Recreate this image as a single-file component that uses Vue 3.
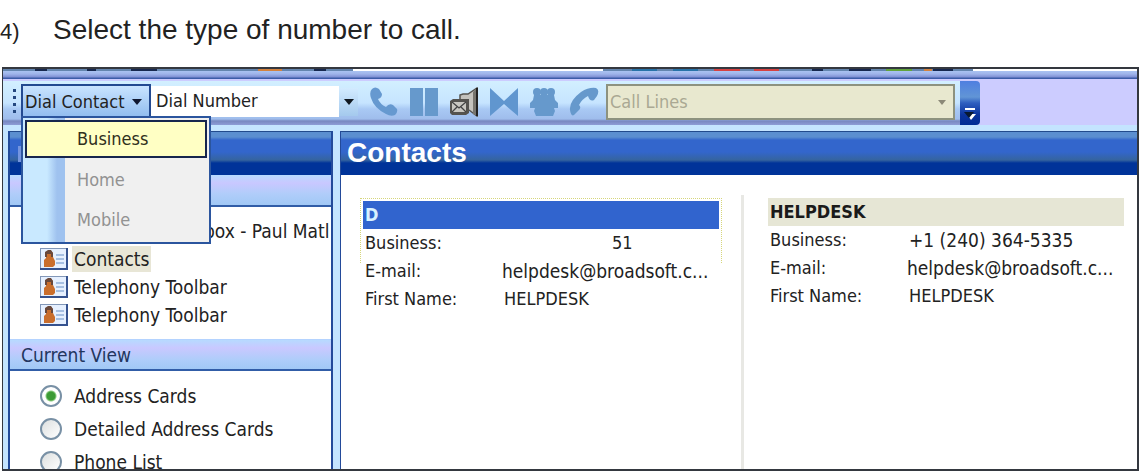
<script setup>
import { ref } from 'vue'

const menu = [
  { label: 'Business', enabled: true },
  { label: 'Home', enabled: false },
  { label: 'Mobile', enabled: false },
]
const folders = [
  { label: 'Contacts', selected: true },
  { label: 'Telephony Toolbar' },
  { label: 'Telephony Toolbar' },
]
const views = ['Address Cards', 'Detailed Address Cards', 'Phone List']
const view = ref('Address Cards')
const cards = [
  {
    title: 'D',
    active: true,
    rows: [['Business:', '51', 'short'], ['E-mail:', 'helpdesk@broadsoft.c...', 'mail'], ['First Name:', 'HELPDESK', 'name']],
  },
  {
    title: 'HELPDESK',
    active: false,
    rows: [['Business:', '+1 (240) 364-5335', 'phone'], ['E-mail:', 'helpdesk@broadsoft.c...', 'mail'], ['First Name:', 'HELPDESK', 'name']],
  },
]
</script>

<template>
  <main class="page">
    <header class="step"><span class="num">4)</span><span>Select the type of number to call.</span></header>
    <section class="frame">
      <div class="strip">
        <svg class="bits" width="1134" height="2" aria-hidden="true">
          <rect width="1134" height="2" fill="#6485ae" />
          <path d="M350 0h250v2h-250zM970 0h164v2h-164z" fill="#fff" />
          <path d="M32 0h12v2h-12zM84 0h9v2h-9zM128 0h26v2h-26zM311 0h12v2h-12zM809 0h11v2h-11zM846 0h22v2h-22zM930 0h20v2h-20z" fill="#17284f" />
          <path d="M255 0h24v2h-24zM921 0h8v2h-8z" fill="#d3823f" />
          <path d="M629 0h25v2h-25zM670 0h25v2h-25z" fill="#2873a8" />
          <path d="M711 0h26v2h-26zM751 0h25v2h-25z" fill="#d64242" />
          <path d="M883 0h26v2h-26z" fill="#62a33c" />
        </svg>
      </div>
      <div class="band">
        <div class="toolbar">
          <svg class="grip" width="4" height="26" viewBox="0 0 4 26" aria-hidden="true">
            <path d="M0 0h3v3H0zM0 7h3v3H0zM0 14h3v3H0zM0 21h3v3H0z" fill="#24477f" />
          </svg>
          <div class="drop">
            <button class="dial" type="button" aria-haspopup="true">
              Dial Contact
              <svg width="10" height="6" viewBox="0 0 10 6" aria-hidden="true"><path d="M0 0h10L5 6z" fill="#101830" /></svg>
            </button>
            <div class="menu" role="menu">
              <button v-for="m in menu" :key="m.label" type="button" role="menuitem" class="item" :class="{ hot: m.enabled }" :disabled="!m.enabled">{{ m.label }}</button>
            </div>
          </div>
          <input class="number" type="text" value="Dial Number" aria-label="Dial Number" />
          <button class="arrow" type="button" aria-label="Recent numbers">
            <svg width="10" height="6" viewBox="0 0 10 6" aria-hidden="true"><path d="M0 0h10L5 6z" fill="#101820" /></svg>
          </button>
          <div class="tools">
            <button class="tool" type="button" aria-label="Call">
              <svg width="30" height="30" viewBox="0 0 30 30"><path d="M3 2Q6 -1 10 2L13 7Q13 11 9 12Q11 17 17 20Q20 16 24 18L28 22Q29 25 26 28Q22 30 17 27Q5 21 2 11Q0 5 3 2Z" fill="#6699d0" /></svg>
            </button>
            <button class="tool" type="button" aria-label="Hold">
              <svg width="30" height="30" viewBox="0 0 30 30"><path d="M1 1h13v28H1zM16 1h13v28H16z" fill="#6699cc" /></svg>
            </button>
            <button class="tool" type="button" aria-label="Voice mail">
              <svg width="30" height="30" viewBox="0 0 30 30">
                <path d="M11 13V8l3-1h5l9-6v28l-8-6" fill="#c4c2bd" stroke="#55534f" stroke-width="1.5" />
                <path d="M24 5v22l4 2V1z" fill="#77756f" /><path d="M28 1v28" stroke="#222" stroke-width="2" />
                <path d="M1 14l3-2h16v14l-3 2H3l-2-2z" fill="#55534f" />
                <path d="M3 15h14v10H3z" fill="#c9c7c1" />
                <path d="M3 15l7 6 7-6M3 25l5-5M17 25l-5-5" fill="none" stroke="#444" stroke-width="1.3" />
              </svg>
            </button>
            <button class="tool" type="button" aria-label="Transfer">
              <svg width="30" height="30" viewBox="0 0 30 30"><path d="M1 1l14 13L29 1v28L15 17 1 29z" fill="#6096cf" /></svg>
            </button>
            <button class="tool" type="button" aria-label="Conference">
              <svg width="30" height="30" viewBox="0 0 30 30" fill="#6699cc">
                <circle cx="8" cy="5" r="4" /><circle cx="15" cy="5" r="4" /><circle cx="22" cy="5" r="4" />
                <path d="M5 8h20l1 5 3 3v5h-4l1 3-2 5H7l-2-5 1-3H1v-5l3-3z" />
              </svg>
            </button>
            <button class="tool" type="button" aria-label="Hang up">
              <svg width="30" height="30" viewBox="0 0 30 30"><path d="M1 23Q0 14 12 5Q20 0 27 1Q31 3 28 9L25 13Q21 15 19 9Q13 12 10 18Q13 21 9 24L5 28Q2 30 1 23Z" fill="#6699cc" /></svg>
            </button>
          </div>
          <div class="lines">
            <select disabled aria-label="Call Lines"><option>Call Lines</option></select>
            <svg width="8" height="5" viewBox="0 0 8 5" aria-hidden="true"><path d="M0 0h8L4 5z" fill="#8b8978" /></svg>
          </div>
        </div>
        <button class="more" type="button" aria-label="Toolbar options">
          <svg width="12" height="12" viewBox="0 0 12 12" aria-hidden="true"><path d="M1 0h10v2H1z" fill="#fff" /><path d="M3 6h9l-5 6z" fill="#fff" /><path d="M0 4h10L5 10z" fill="#081830" /></svg>
        </button>
      </div>
      <div class="body">
        <aside class="side">
          <div class="title peek"></div>
          <div class="sub"></div>
          <ul class="tree">
            <li class="root">box - Paul Matl</li>
            <li v-for="(f, i) in folders" :key="i">
              <svg width="28" height="22" viewBox="0 0 28 22" aria-hidden="true">
                <path d="M0 0h28v22H0z" fill="#35528f" /><path d="M0 0h26v20H0z" fill="#8297b8" /><path d="M1 1h25v19H1z" fill="#e6f0ff" />
                <path d="M4 19v-7l2-2V5l2-2h3l2 2v4l2 4v4l-2 2z" fill="#c96e2d" /><path d="M5 9V4l3-2h3l2 3v4h-2V6H7v3z" fill="#69483b" />
                <path d="M16 7h8M16 11h8M16 15h8" stroke="#91afd9" stroke-width="1.5" />
              </svg>
              <a href="#" :class="{ selected: f.selected }">{{ f.label }}</a>
            </li>
          </ul>
          <div class="sub view">Current View</div>
          <div class="views">
            <label v-for="v in views" :key="v"><input v-model="view" type="radio" name="view" :value="v" />{{ v }}</label>
          </div>
        </aside>
        <section class="content">
          <h1 class="title">Contacts</h1>
          <div class="cards">
            <article v-for="c in cards" :key="c.title" class="card" :class="{ active: c.active }">
              <h2>{{ c.title }}</h2>
              <dl>
                <template v-for="r in c.rows" :key="r[0]">
                  <dt>{{ r[0] }}</dt>
                  <dd :class="r[2]">{{ r[1] }}</dd>
                </template>
              </dl>
            </article>
          </div>
        </section>
      </div>
    </section>
  </main>
</template>

<style>
body { margin: 0; background: #fff; }
</style>

<style scoped>
* { box-sizing: border-box; }
button, input, select { font: inherit; color: inherit; margin: 0; padding: 0; border: 0; border-radius: 0; }
.page { height: 100vh; display: flex; flex-direction: column; padding: 0 2px 3px; overflow: hidden; font: 18px/28px "DejaVu Sans Condensed", "DejaVu Sans", sans-serif; color: #222; }
.step { height: 67px; flex: none; display: flex; align-items: baseline; padding-top: 14px; font: 28px/32px "Liberation Sans", Arial, sans-serif; white-space: nowrap; }
.num { width: 53px; flex: none; font-size: 22px; margin-left: -2px; }
.frame { flex: 1; min-height: 0; display: flex; flex-direction: column; border: 2px solid #34383f; border-width: 2px 2px 2px 1px; overflow: hidden; background: #c4e4ff; }
.strip { height: 10px; flex: none; overflow: hidden; background: linear-gradient(#b0ccf6, #9fb4ea 5px, #7f90d4 8px, #3c5ca8 9px); }
.bits { display: block; }
.band { flex: none; height: 46px; display: flex; background: #ccccff; padding-top: 2px; }
.toolbar { display: flex; align-items: flex-start; padding: 3px 5px 0 10px; height: 44px; background: linear-gradient(#d2efff, #c6e4ff 22px, #a9c9f4 28px, #9fbdec 38px, #7787c0 40px, #8d9cd6); }
.grip { margin-top: 5px; margin-right: 4px; flex: none; }
.drop { position: relative; flex: none; }
.dial { width: 130px; height: 34px; display: flex; align-items: center; justify-content: space-between; padding: 0 7px 0 2px; border: 2px solid #234a91; border-bottom: 0; background: linear-gradient(#c9e4ff, #8fbbef); white-space: nowrap; }
.menu { position: absolute; z-index: 2; left: 0; top: 32px; width: 190px; padding: 2px; border: 2px solid #2b559e; background: linear-gradient(90deg, #c9e9ff 0 24px, #9fc2ef 34px 42px, #f0f0f0 42px); }
.item { display: block; width: 100%; height: 40px; padding-left: 52px; text-align: left; background: none; color: #929292; }
.hot { background: #ffffc4; border: 2px solid #17264e; padding-left: 50px; color: #30301c; height: 38px; margin-bottom: 2px; }
.number { width: 188px; height: 31px; margin-top: 2px; padding: 0 5px 2px; background: #fff; }
.arrow { width: 19px; height: 28px; margin-top: 4px; background: linear-gradient(#d2ebff, #a4c9ed); display: flex; align-items: center; justify-content: center; }
.tools { display: flex; gap: 10px; padding: 3px 7px 0 11px; }
.tool { width: 30px; height: 30px; background: none; }
.tool svg { display: block; }
.lines { position: relative; width: 349px; height: 36px; }
.lines select { appearance: none; width: 100%; height: 100%; padding-left: 2px; border: 2px solid #8d927f; background: #e8e8cf; color: #aaa893; opacity: 1; }
.lines svg { position: absolute; right: 9px; top: 16px; }
.more { width: 20px; height: 44px; display: flex; align-items: flex-end; padding: 0 0 5px 4px; border-radius: 0 4px 4px 0; background: linear-gradient(#4f7fe0, #6195d6 16px, #2f5fbf 22px, #0a329c 34px, #002c94); }
.body { flex: 1; min-height: 0; display: flex; gap: 7px; padding: 5px 0 0 5px; margin-top: 1px; background: #c4e4ff; }
.side { width: 325px; flex: none; border: 1px solid #234a9a; border-width: 0 2px; background: #fff; overflow: hidden; font-size: 19px; }
.title { height: 44px; flex: none; margin: 0; padding-left: 6px; border-top: 1px solid #224b8c; font: bold 28px/42px "Liberation Sans", Arial, sans-serif; color: #fff; background: linear-gradient(#5b8fd0 0 5px, #3366cc 8px 20px, #35649f 28px, #003399 31px); }
.peek { padding: 14px 0 0 8px; }
.peek::before { content: ""; display: block; width: 4px; height: 16px; background: #7595df; }
.sub { height: 32px; padding-left: 11px; background: linear-gradient(#b7daff, #c9c8ff 8px, #b0cdfa 19px, #a1c8f5); border-bottom: 2px solid #315da7; color: #23365f; }
.tree { list-style: none; margin: 0; height: 132px; padding: 10px 0 0 30px; overflow: hidden; white-space: nowrap; }
.tree li { height: 28px; display: flex; align-items: center; gap: 4px; }
.tree .root { padding-left: 164px; }
.tree a { color: inherit; text-decoration: none; padding: 0 2px; line-height: 26px; }
.tree .selected { background: #e8e6d6; }
.view { border-top: 1px solid #b4d3ff; line-height: 30px; }
.views { padding: 8px 0 0 30px; }
.views label { height: 33px; display: flex; align-items: center; gap: 12px; white-space: nowrap; }
.views input { appearance: none; width: 22px; height: 22px; border: 2px solid #7890a5; border-radius: 50%; background: linear-gradient(135deg, #dcdfdf, #fff); }
.views input:checked { background: radial-gradient(circle, #3c9b35 0 4px, #8dcb83 5px, #fff 6px); }
.content { flex: 1; min-width: 0; display: flex; flex-direction: column; border-left: 1px solid #234a9a; background: #fff; }
.cards { flex: 1; display: flex; padding-top: 20px; }
.card { box-sizing: content-box; flex: 1 1 0; min-width: 0; padding: 3px 13px 0 24px; }
.active { position: relative; padding: 6px 22px 0; border-right: 3px solid #e8e8e4; }
.active::before { content: ""; position: absolute; left: 19px; right: 19px; top: 3px; height: 64px; border: 1px dotted #d6d67c; border-bottom: 0; }
.card h2 { height: 28px; margin: 0; padding-left: 2px; font-size: 18px; line-height: 28px; background: #e6e6d5; color: #1a1a1a; }
.active h2 { background: #3164ce; color: #d7f1ff; }
.card dl { display: grid; grid-template-columns: 137px 1fr; margin: 0; padding-left: 2px; white-space: nowrap; }
.card dt, .card dd { margin: 0; height: 28px; line-height: 28px; }
.card dd { padding-left: 2px; }
.card .mail { padding-left: 0; font-size: 19px; }
.card .phone { font-size: 19px; }
.card .short { padding-left: 110px; }
</style>
